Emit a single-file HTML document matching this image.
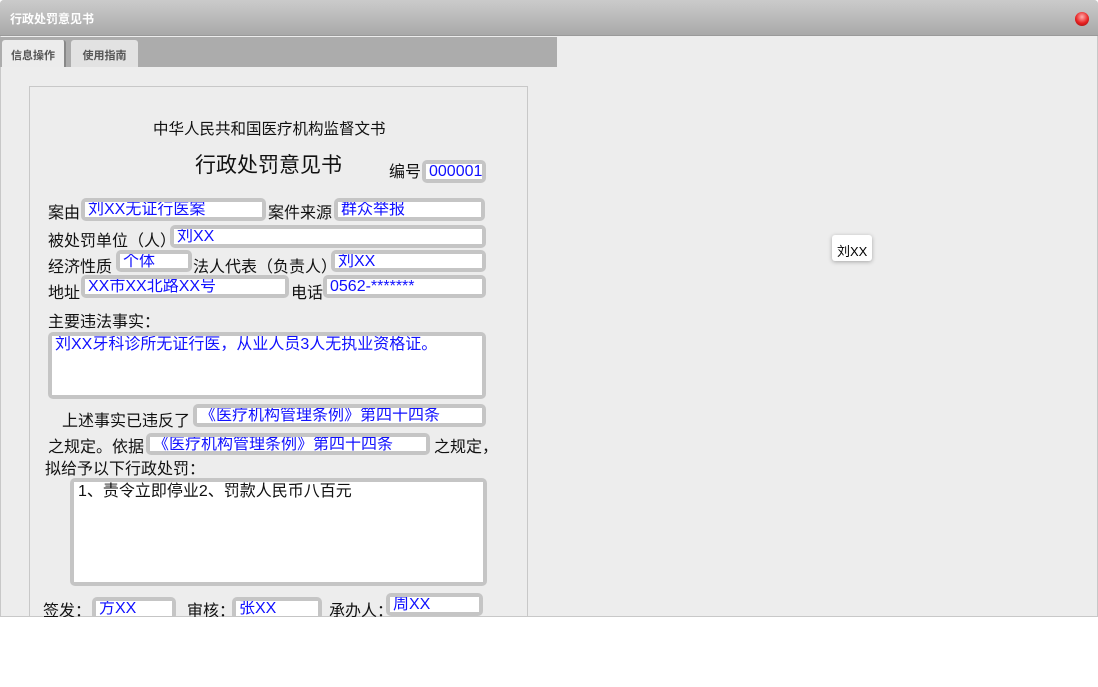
<!DOCTYPE html>
<html><head><meta charset="utf-8"><style>
*{margin:0;padding:0;box-sizing:border-box}
body{width:1098px;height:687px;background:#fff;position:relative;overflow:hidden;font-family:"Liberation Sans","Noto Sans CJK SC",sans-serif;}
.win{position:absolute;left:0;top:0;width:1098px;height:617px;background:#ededed;box-shadow:inset 0 0 0 1px #c8c8c8;border-radius:4px 4px 0 0;overflow:hidden}
.tb{position:absolute;left:0;top:0;width:100%;height:36px;background:linear-gradient(#cbcbcb,#a9a9a9);border-bottom:1px solid #9a9a9a}
.tb span{position:absolute;left:10px;top:10px;color:#fff;font-weight:bold;font-size:12px}
.close{position:absolute;left:1075px;top:12px;width:14px;height:14px;border-radius:50%;background:radial-gradient(circle at 50% 35%,#ffb0b0,#e82020 55%,#901010);}
.tabs{position:absolute;left:0;top:37px;width:557px;height:30px;background:#acacac}
.tab{position:absolute;top:3px;height:27px;font-size:11px;font-weight:bold;color:#555;padding:7px 0 0;text-align:center;border-radius:3px 3px 0 0}
.paper{position:absolute;left:29px;top:86px;width:499px;height:540px;border:1px solid #c8c8c8}
.t{position:absolute;font-size:16px;color:#111;white-space:nowrap;line-height:18px}
.f{position:absolute;background:#c5c5c5;border-radius:5px;padding:4px}
.f div{background:#fff;width:100%;height:100%;color:#1010ff;font-size:16px;line-height:16px;padding-left:3px;white-space:nowrap;overflow:hidden}
.tip{position:absolute;left:832px;top:235px;width:40px;height:26px;background:#fff;border-radius:3px;box-shadow:0 1px 4px rgba(0,0,0,.3);font-size:13px;padding:6px 0 0 5px}
</style></head><body>
<div class="win">
<div class="tb"><span>行政处罚意见书</span><div class="close"></div></div>
<div class="tabs">
<div class="tab" style="left:2px;width:64px;background:#ececec;border-right:2px solid #888">信息操作</div>
<div class="tab" style="left:71px;width:67px;background:#e2e2e2">使用指南</div>
</div>
<div class="paper"></div>
<div class="t" style="left:153px;top:121px;font-size:15.5px">中华人民共和国医疗机构监督文书</div>
<div class="t" style="left:195px;top:154px;font-size:21px;line-height:24px">行政处罚意见书</div>
<div class="t" style="left:389px;top:164px">编号</div>
<div class="f" style="left:422px;top:160px;width:64px;height:23px"><div>000001</div></div>

<div class="t" style="left:48px;top:205px">案由</div>
<div class="f" style="left:81px;top:198px;width:185px;height:23px"><div>刘XX无证行医案</div></div>
<div class="t" style="left:268px;top:205px">案件来源</div>
<div class="f" style="left:334px;top:198px;width:151px;height:23px"><div>群众举报</div></div>

<div class="t" style="left:48px;top:233px">被处罚单位（人）</div>
<div class="f" style="left:170px;top:225px;width:316px;height:23px"><div>刘XX</div></div>

<div class="t" style="left:48px;top:259px">经济性质</div>
<div class="f" style="left:116px;top:250px;width:76px;height:22px"><div>个体</div></div>
<div class="t" style="left:193px;top:259px">法人代表（负责人）</div>
<div class="f" style="left:331px;top:250px;width:155px;height:22px"><div>刘XX</div></div>

<div class="t" style="left:48px;top:285px">地址</div>
<div class="f" style="left:81px;top:275px;width:208px;height:23px"><div>XX市XX北路XX号</div></div>
<div class="t" style="left:291px;top:285px">电话</div>
<div class="f" style="left:323px;top:275px;width:163px;height:23px"><div>0562-*******</div></div>

<div class="t" style="left:48px;top:314px">主要违法事实：</div>
<div class="f" style="left:48px;top:332px;width:438px;height:67px"><div style="line-height:18px">刘XX牙科诊所无证行医，从业人员3人无执业资格证。</div></div>

<div class="t" style="left:62px;top:413px">上述事实已违反了</div>
<div class="f" style="left:193px;top:404px;width:293px;height:23px"><div>《医疗机构管理条例》第四十四条</div></div>
<div class="t" style="left:48px;top:439px">之规定。依据</div>
<div class="f" style="left:146px;top:433px;width:284px;height:22px"><div>《医疗机构管理条例》第四十四条</div></div>
<div class="t" style="left:434px;top:439px">之规定，</div>
<div class="t" style="left:45px;top:461px">拟给予以下行政处罚：</div>
<div class="f" style="left:70px;top:478px;width:417px;height:108px"><div style="color:#111;line-height:20px;padding-left:4px">1、责令立即停业2、罚款人民币八百元</div></div>

<div class="t" style="left:43px;top:603px">签发：</div>
<div class="f" style="left:92px;top:597px;width:84px;height:23px"><div>方XX</div></div>
<div class="t" style="left:187px;top:603px">审核：</div>
<div class="f" style="left:232px;top:597px;width:90px;height:23px"><div>张XX</div></div>
<div class="t" style="left:329px;top:603px">承办人：</div>
<div class="f" style="left:386px;top:593px;width:97px;height:23px"><div>周XX</div></div>
<div class="tip">刘XX</div>
</div>
</body></html>
